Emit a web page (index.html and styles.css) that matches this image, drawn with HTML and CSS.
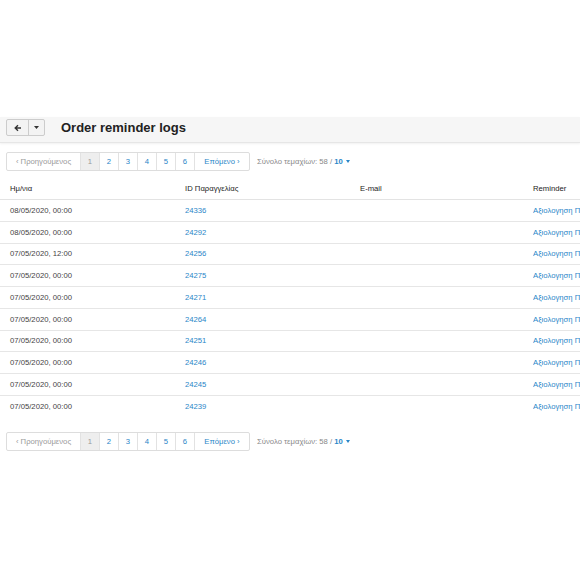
FILE: index.html
```html
<!DOCTYPE html>
<html>
<head>
<meta charset="utf-8">
<link rel="stylesheet" href="styles.css">
</head>
<body>
<div class="page">
  <div class="topspace"></div>
  <div class="header">
    <div class="btngroup">
      <span class="btn back"><svg width="8" height="8" viewBox="0 0 8 8"><path d="M7 4H1.5M4 1.2L1.2 4L4 6.8" fill="none" stroke="#333" stroke-width="1.4"/></svg></span>
      <span class="btn caret"><svg width="5" height="3" viewBox="0 0 5 3"><path d="M0 0H5L2.5 3Z" fill="#333"/></svg></span>
    </div>
    <h1 class="title">Order reminder logs</h1>
  </div>
  <div class="pagerrow">
    <div class="pager">
      <span class="pg prev">‹ Προηγούμενος</span>
      <span class="pg num active">1</span>
      <span class="pg num">2</span>
      <span class="pg num">3</span>
      <span class="pg num">4</span>
      <span class="pg num">5</span>
      <span class="pg num">6</span>
      <span class="pg next">Επόμενο ›</span>
    </div>
    <span class="total">Σύνολο τεμαχίων: 58 / <b class="per">10</b> <span class="dd"></span></span>
  </div>
  <table class="grid">
    <thead>
      <tr><th class="c1">Ημ/νια</th><th class="c2">ID Παραγγελίας</th><th class="c3">E-mail</th><th class="c4">Reminder</th></tr>
    </thead>
    <tbody>
      <tr><td>08/05/2020, 00:00</td><td class="link">24336</td><td></td><td class="link rem">Αξιολογηση Παραγγελίας</td></tr>
      <tr><td>08/05/2020, 00:00</td><td class="link">24292</td><td></td><td class="link rem">Αξιολογηση Παραγγελίας</td></tr>
      <tr><td>07/05/2020, 12:00</td><td class="link">24256</td><td></td><td class="link rem">Αξιολογηση Παραγγελίας</td></tr>
      <tr><td>07/05/2020, 00:00</td><td class="link">24275</td><td></td><td class="link rem">Αξιολογηση Παραγγελίας</td></tr>
      <tr><td>07/05/2020, 00:00</td><td class="link">24271</td><td></td><td class="link rem">Αξιολογηση Παραγγελίας</td></tr>
      <tr><td>07/05/2020, 00:00</td><td class="link">24264</td><td></td><td class="link rem">Αξιολογηση Παραγγελίας</td></tr>
      <tr><td>07/05/2020, 00:00</td><td class="link">24251</td><td></td><td class="link rem">Αξιολογηση Παραγγελίας</td></tr>
      <tr><td>07/05/2020, 00:00</td><td class="link">24246</td><td></td><td class="link rem">Αξιολογηση Παραγγελίας</td></tr>
      <tr><td>07/05/2020, 00:00</td><td class="link">24245</td><td></td><td class="link rem">Αξιολογηση Παραγγελίας</td></tr>
      <tr><td>07/05/2020, 00:00</td><td class="link">24239</td><td></td><td class="link rem">Αξιολογηση Παραγγελίας</td></tr>
    </tbody>
  </table>
  <div class="pagerrow bottom">
    <div class="pager">
      <span class="pg prev">‹ Προηγούμενος</span>
      <span class="pg num active">1</span>
      <span class="pg num">2</span>
      <span class="pg num">3</span>
      <span class="pg num">4</span>
      <span class="pg num">5</span>
      <span class="pg num">6</span>
      <span class="pg next">Επόμενο ›</span>
    </div>
    <span class="total">Σύνολο τεμαχίων: 58 / <b class="per">10</b> <span class="dd"></span></span>
  </div>
</div>
</body>
</html>
```
FILE: styles.css
```css
html, body {
  margin: 0;
  padding: 0;
  background: #fff;
}
body {
  font-family: "Liberation Sans", Arial, sans-serif;
  color: #333;
  width: 580px;
  height: 580px;
  overflow: hidden;
}
.page {
  width: 580px;
}
.topspace {
  height: 117px;
}
.header {
  height: 26px;
  box-sizing: border-box;
  background: #f6f6f6;
  border-bottom: 1px solid #e6e6e6;
  box-shadow: 0 1px 2px rgba(0,0,0,0.06);
  display: flex;
  align-items: flex-start;
  padding: 2px 0 0 6px;
}
.btngroup {
  display: flex;
  height: 17px;
  border: 1px solid #ccc;
  border-radius: 2px;
  background: #f3f3f3;
  box-sizing: border-box;
}
.btn {
  display: flex;
  align-items: center;
  justify-content: center;
}
.back {
  width: 21px;
  border-right: 1px solid #ccc;
}
.caret {
  width: 15px;
}
.title {
  margin: 0 0 0 16px;
  font-size: 13px;
  line-height: 17px;
  font-weight: bold;
  color: #222;
}
.pagerrow {
  display: flex;
  align-items: center;
  margin-top: 9px;
  padding-left: 6px;
  height: 19px;
}
.pager {
  display: flex;
  height: 19px;
  border: 1px solid #ddd;
  border-radius: 2px;
  box-sizing: border-box;
  font-size: 7.7px;
}
.pg {
  display: flex;
  align-items: center;
  justify-content: center;
  border-left: 1px solid #e2e2e2;
  color: #2a86c8;
}
.pg:first-child {
  border-left: none;
}
.prev {
  width: 73px;
  color: #999;
}
.num {
  width: 18px;
}
.active {
  background: #eee;
  color: #999;
}
.next {
  width: 54px;
}
.total {
  margin-left: 7px;
  font-size: 7.7px;
  color: #888;
}
.per {
  color: #2a86c8;
  font-weight: bold;
}
.dd {
  display: inline-block;
  width: 0;
  height: 0;
  border-left: 2.5px solid transparent;
  border-right: 2.5px solid transparent;
  border-top: 3px solid #2a86c8;
  vertical-align: middle;
  margin-left: 1px;
}
.grid {
  margin-top: 7px;
  border-collapse: collapse;
  width: 590px;
  font-size: 7.7px;
  table-layout: fixed;
}
.grid th {
  text-align: left;
  font-weight: normal;
  color: #222;
  height: 21px;
  padding: 0;
  border-bottom: 1px solid #e3e3e3;
}
.grid td {
  height: 20.78px;
  padding: 0;
  border-bottom: 1px solid #e6e6e6;
  white-space: nowrap;
  overflow: hidden;
  color: #444;
}
.grid tbody tr:last-child td {
  border-bottom: none;
}
.grid th:nth-child(1), .grid td:nth-child(1) { width: 175px; padding-left: 10px; }
.grid th:nth-child(2), .grid td:nth-child(2) { width: 175px; }
.grid th:nth-child(3), .grid td:nth-child(3) { width: 173px; }
.grid th:nth-child(4), .grid td:nth-child(4) { width: 57px; }
.grid td.link {
  color: #2a86c8;
}
.pagerrow.bottom {
  margin-top: 15px;
}
```
